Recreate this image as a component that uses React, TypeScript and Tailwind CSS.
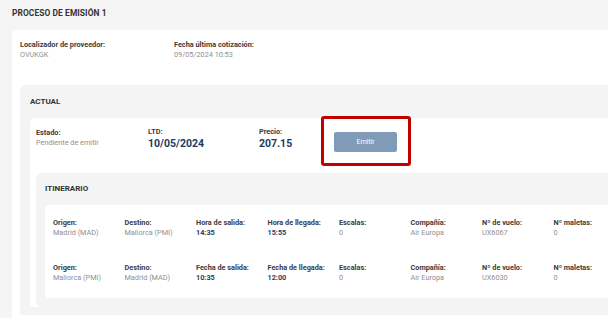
const font = { fontFamily: 'Roboto, "Noto Sans", Arial, sans-serif' }

interface Leg {
  origin: string
  destination: string
  depLabel: string
  depValue: string
  arrLabel: string
  arrValue: string
  stops: string
  airline: string
  flight: string
  bags: string
}

const legs: Leg[] = [
  {
    origin: 'Madrid (MAD)',
    destination: 'Mallorca (PMI)',
    depLabel: 'Hora de salida:',
    depValue: '14:35',
    arrLabel: 'Hora de llegada:',
    arrValue: '15:55',
    stops: '0',
    airline: 'Air Europa',
    flight: 'UX6067',
    bags: '0',
  },
  {
    origin: 'Mallorca (PMI)',
    destination: 'Madrid (MAD)',
    depLabel: 'Fecha de salida:',
    depValue: '10:35',
    arrLabel: 'Fecha de llegada:',
    arrValue: '12:00',
    stops: '0',
    airline: 'Air Europa',
    flight: 'UX6030',
    bags: '0',
  },
]

function Field({
  label,
  value,
  strong,
  tight,
}: {
  label: string
  value: string
  strong?: boolean
  tight?: boolean
}) {
  const lh = tight ? 'leading-[9.5px]' : 'leading-[10px]'
  return (
    <div className="flex flex-col">
      <span className={`text-[7.3px] ${lh} font-bold text-[#3b3b3b] whitespace-nowrap`}>{label}</span>
      <span
        className={[
          `text-[7.3px] ${lh} whitespace-nowrap`,
          strong ? 'font-bold text-[#1f426b]' : 'text-[#8f8f8f]',
        ].join(' ')}
      >
        {value}
      </span>
    </div>
  )
}

function BigField({ label, value }: { label: string; value: string }) {
  return (
    <div className="flex flex-col">
      <span className="text-[7.3px] leading-[10px] font-bold text-[#3b3b3b]">{label}</span>
      <span className="text-[10.5px] leading-[13px] font-bold text-[#1b3b60]">{value}</span>
    </div>
  )
}

export default function App() {
  return (
    <div className="relative w-[615px] h-[318px] overflow-hidden bg-white" style={font}>
      <div className="w-[608px] h-full bg-[#f5f5f5] pl-3 overflow-hidden">
        {/* Title */}
        <div className="h-[30px] flex items-center pb-1 text-[8.4px] font-bold text-[#333] tracking-[0.1px]">
          PROCESO DE EMISIÓN 1
        </div>

        {/* Main card */}
        <div className="h-[300px] bg-white rounded-tl-[4px] pl-2 pt-[10px]">
          <div className="flex">
            <div className="w-[154px]">
              <Field label="Localizador de proveedor:" value="OVUKGK" />
            </div>
            <Field label="Fecha última cotización:" value="09/05/2024 10:53" />
          </div>

          {/* ACTUAL */}
          <div className="mt-[25px] bg-[#f4f4f4] rounded-tl-[5px] pb-[2px]">
            <div className="h-[33px] flex items-center pl-[10px] text-[8px] font-bold text-[#333]">
              ACTUAL
            </div>
            <div className="ml-[10px] bg-white rounded-tl-[4px] rounded-bl-[4px]">
              <div className="h-[55px] flex pl-[6px] pt-[9px]">
                <div className="w-[112px] pt-[1px]">
                  <Field label="Estado:" value="Pendiente de emitir" />
                </div>
                <div className="w-[111px]">
                  <BigField label="LTD:" value="10/05/2024" />
                </div>
                <div className="w-[75px]">
                  <BigField label="Precio:" value="207.15" />
                </div>
                <button
                  type="button"
                  className="mt-[5px] w-[63px] h-[20px] rounded-[2px] bg-[#7f9bb7] text-white text-[7px]"
                >
                  Emitir
                </button>
              </div>

              {/* ITINERARIO */}
              <div className="ml-[6px] bg-[#f4f4f4] rounded-tl-[5px] rounded-bl-[5px] pb-[9px] mb-[6px]">
                <div className="h-[32px] flex items-center pl-[9px] text-[8px] font-bold text-[#333]">
                  ITINERARIO
                </div>
                <div className="ml-[9px] bg-white rounded-tl-[4px] rounded-bl-[4px] pl-[8px] pt-[13px] pb-[16px] flex flex-col gap-[26px]">
                  {legs.map(leg => (
                    <div key={leg.flight} className="grid grid-cols-[repeat(8,71.5px)]">
                      <Field tight label="Origen:" value={leg.origin} />
                      <Field tight label="Destino:" value={leg.destination} />
                      <Field tight label={leg.depLabel} value={leg.depValue} strong />
                      <Field tight label={leg.arrLabel} value={leg.arrValue} strong />
                      <Field tight label="Escalas:" value={leg.stops} />
                      <Field tight label="Compañía:" value={leg.airline} />
                      <Field tight label="Nº de vuelo:" value={leg.flight} />
                      <Field tight label="Nº maletas:" value={leg.bags} />
                    </div>
                  ))}
                </div>
              </div>
            </div>
          </div>
        </div>
      </div>

      {/* Highlight around the emit button */}
      <div className="absolute left-[321px] top-[116px] w-[90px] h-[50px] border-[3px] border-[#c20000] rounded-[3px]" />
    </div>
  )
}
